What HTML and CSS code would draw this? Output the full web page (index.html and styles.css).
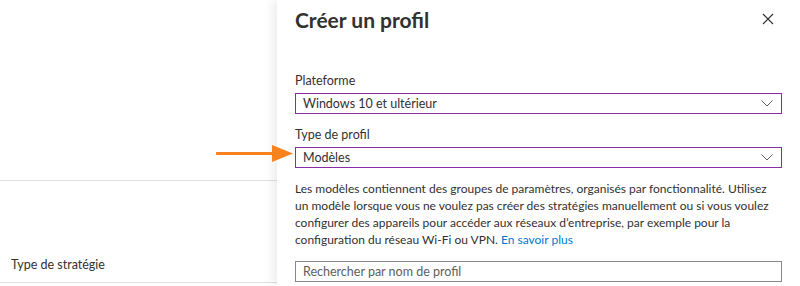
FILE: index.html
```html
<!DOCTYPE html>
<html lang="fr">
<head>
<meta charset="utf-8">
<link rel="stylesheet" href="styles.css">
</head>
<body>
<div class="page">
  <div class="left">
    <div class="left-top"></div>
    <div class="left-row">Type de stratégie</div>
  </div>
  <div class="panel">
    <div class="head">
      <h1 class="title">Créer un profil</h1>
      <svg class="close" width="12" height="12" viewBox="0 0 12 12"><path d="M1 1L11 11M11 1L1 11" stroke="#323130" stroke-width="1.1"/></svg>
    </div>
    <div class="field">
      <div class="label">Plateforme</div>
      <div class="select"><span>Windows 10 et ultérieur</span><svg width="12" height="7" viewBox="0 0 12 7"><path d="M0.5 0.5L6 6L11.5 0.5" fill="none" stroke="#605e5c" stroke-width="1"/></svg></div>
    </div>
    <div class="field">
      <div class="label">Type de profil</div>
      <div class="select"><span>Modèles</span><svg width="12" height="7" viewBox="0 0 12 7"><path d="M0.5 0.5L6 6L11.5 0.5" fill="none" stroke="#605e5c" stroke-width="1"/></svg></div>
    </div>
    <p class="desc">Les modèles contiennent des groupes de paramètres, organisés par fonctionnalité. Utilisez un modèle lorsque vous ne voulez pas créer des stratégies manuellement ou si vous voulez configurer des appareils pour accéder aux réseaux d’entreprise, par exemple pour la configuration du réseau Wi-Fi ou VPN. <a href="#" class="link">En savoir plus</a></p>
    <div class="search">Rechercher par nom de profil</div>
  </div>
</div>
<svg class="arrow" width="80" height="22" viewBox="0 0 80 22"><path d="M1 10.5H58" stroke="#f7821e" stroke-width="3" stroke-linecap="round"/><path d="M56 2L77 10.5L56 19Z" fill="#f7821e"/></svg>
</body>
</html>
```
FILE: styles.css
```css
* { box-sizing: border-box; }
html, body { margin: 0; padding: 0; background: #fff; }
body {
  font-family: "Lato", "Open Sans", sans-serif;
  color: #323130;
  font-size: 12px;
  width: 800px;
  height: 286px;
  overflow: hidden;
  position: relative;
}
.page { display: flex; height: 286px; }
.left { width: 277px; flex: none; }
.left-top { height: 181px; border-bottom: 1px solid #e1dfdd; }
.left-row {
  height: 102px;
  border-bottom: 1px solid #e1dfdd;
  display: flex;
  align-items: flex-end;
  padding: 0 0 10px 11px;
  font-size: 12.5px;
}
.panel {
  flex: 1;
  background: #fff;
  box-shadow: -4px 0 10px rgba(0,0,0,0.08);
  padding: 0 18px 0 18px;
  position: relative;
}
.head { display: flex; justify-content: space-between; align-items: center; height: 38px; }
.title { margin: 0; font-size: 21px; font-weight: 700; color: #323130; }
.close { margin-right: 8px; }
.head + .field { margin-top: 34px; }
.label { font-size: 12.5px; line-height: 17px; height: 17px; }
.select {
  height: 21px;
  border: 1px solid #8a2da5;
  display: flex;
  align-items: center;
  justify-content: space-between;
  padding: 0 8px 0 7px;
  font-size: 12.5px;
  margin-top: 4px;
  margin-bottom: 12px;
}
.desc { margin: 0; font-size: 12px; line-height: 17px; }
.link { color: #0078d4; text-decoration: none; }
.search {
  margin-top: 13px;
  height: 21px;
  border: 1px solid #8a8886;
  padding: 0 7px;
  display: flex;
  align-items: center;
  color: #605e5c;
  font-size: 12.5px;
}
.arrow { position: absolute; left: 216px; top: 143px; }
```
